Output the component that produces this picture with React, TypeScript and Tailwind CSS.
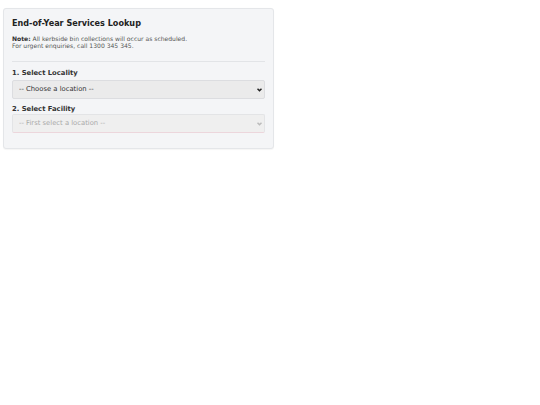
import { useState } from "react";

const localities = ["Northbridge", "Riverside", "Eastwood", "Hillcrest"];

function Chevron({ className }: { className: string }) {
  return (
    <svg
      className={`pointer-events-none absolute right-[3px] top-1/2 h-[4px] w-[5px] -translate-y-1/2 ${className}`}
      viewBox="0 0 10 8"
      fill="none"
      stroke="currentColor"
      strokeWidth="3"
    >
      <path d="M1 1.5l4 4 4-4" />
    </svg>
  );
}

export default function App() {
  const [locality, setLocality] = useState("");

  return (
    <div className="min-h-screen bg-white pl-[3px] pt-[8px] font-['DejaVu_Sans',sans-serif]">
      <div className="w-[271px] rounded-[3px] border border-[#e4e6e9] bg-[#f4f5f7] px-[8px] pb-[15px] pt-[8px] shadow-[0_0.5px_1px_rgba(0,0,0,0.04)]">
        <h1 className="text-[8.1px] font-bold leading-[12px] text-[#222]">End-of-Year Services Lookup</h1>
        <p className="mt-[6px] text-[6.05px] leading-[7px] text-[#555]">
          <strong className="text-[#333]">Note:</strong> All kerbside bin collections will occur as scheduled.
          <br />
          For urgent enquiries, call 1300 345 345.
        </p>
        <hr className="mt-[12px] border-t border-[#e2e4e7]" />
        <label className="mt-[7px] block text-[6.8px] font-bold leading-[9px] text-[#333]">1. Select Locality</label>
        <div className="relative mt-[2px]">
          <select
            className="block h-[19px] w-full appearance-none rounded-[2px] border border-[#dcdde0] bg-[#ebebeb] pl-[6px] pr-[10px] text-[6.8px] text-[#333] outline-none"
            onChange={(event) => setLocality(event.target.value)}
            value={locality}
          >
            <option value="">-- Choose a location --</option>
            {localities.map((name) => (
              <option key={name} value={name}>
                {name}
              </option>
            ))}
          </select>
          <Chevron className="text-[#222]" />
        </div>
        <label className="mt-[6px] block text-[6.8px] font-bold leading-[9px] text-[#333]">2. Select Facility</label>
        <div className="relative">
          <select
            className="block h-[19px] w-full appearance-none rounded-[2px] border border-[#e3e4e6] border-b-[#ecd6dc] bg-[#efefef] pl-[6px] pr-[10px] text-[6.8px] text-[#aaa] outline-none"
            disabled={!locality}
          >
            <option>{locality ? "-- Choose a facility --" : "-- First select a location --"}</option>
          </select>
          <Chevron className="text-[#bbb]" />
        </div>
      </div>
    </div>
  );
}
